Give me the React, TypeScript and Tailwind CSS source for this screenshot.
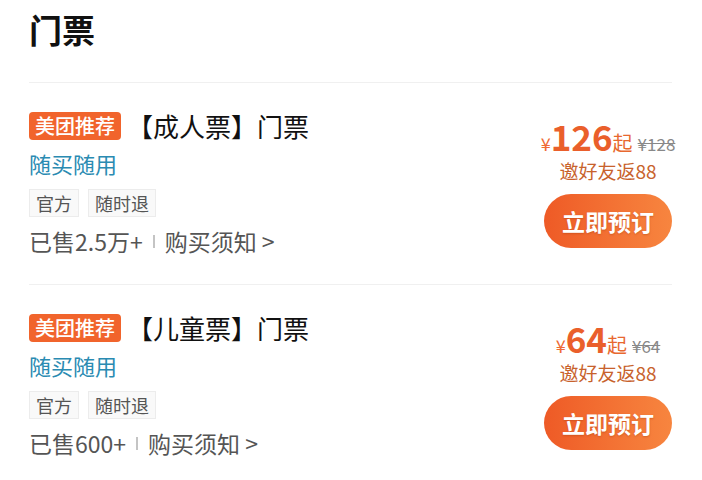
import React from "react";

const FONT = { fontFamily: '"Noto Sans CJK SC", "Noto Sans", sans-serif' };

type Ticket = {
  name: string;
  price: string;
  orig: string;
  sold: string;
};

const tickets: Ticket[] = [
  { name: "【成人票】门票", price: "126", orig: "¥128", sold: "已售2.5万+" },
  { name: "【儿童票】门票", price: "64", orig: "¥64", sold: "已售600+" },
];

function Row({ t, last }: { t: Ticket; last: boolean }) {
  return (
    <div className={`flex items-start justify-between pt-[29px] pb-[28px] ${last ? "" : "border-b border-[#f0f0f0]"}`}>
      <div className="flex flex-col">
        <div className="flex h-[28px] items-center">
          <span className="flex h-[28px] items-center rounded-[4px] bg-[#f1642c] px-[6px] text-[20px] font-medium leading-none text-white">
            美团推荐
          </span>
          <span className="ml-[6px] text-[26px] leading-none text-[#111]">{t.name}</span>
        </div>
        <div className="mt-[8px] text-[22px] leading-[30px] text-[#2a8bb2]">随买随用</div>
        <div className="mt-[11px] flex gap-[9px]">
          <span className="flex h-[28px] items-center border border-[#ececec] bg-[#f9f9f9] px-[6px] text-[18px] leading-none text-[#555]">
            官方
          </span>
          <span className="flex h-[28px] items-center border border-[#ececec] bg-[#f9f9f9] px-[6px] text-[18px] leading-none text-[#555]">
            随时退
          </span>
        </div>
        <div className="mt-[9px] flex h-[30px] items-center text-[23px] leading-none text-[#555]">
          <span>{t.sold}</span>
          <span className="mx-[10px] h-[13px] w-[2px] bg-[#c4c4c4]" />
          <span>购买须知 &gt;</span>
        </div>
      </div>
      <div className="mt-[6px] flex w-[128px] flex-col items-center">
        <div className="flex h-[36px] items-baseline whitespace-nowrap leading-none">
          <span className="text-[18px] leading-none text-[#ef6a34]">¥</span>
          <span className="text-[35px] font-bold leading-[36px] text-[#ea5f2b]">{t.price}</span>
          <span className="text-[20px] leading-none text-[#e8682f]">起</span>
          <span className="ml-[5px] text-[17px] leading-none text-[#888] line-through">{t.orig}</span>
        </div>
        <div className="mt-[7px] text-[19px] leading-[20px] text-[#c8622c]">邀好友返88</div>
        <button className="mt-[13px] flex h-[54px] w-full items-center justify-center rounded-full bg-gradient-to-r from-[#ee5a26] to-[#f7853f] text-[23px] font-bold text-white [text-shadow:0_1px_2px_rgba(150,50,0,0.35)]">
          立即预订
        </button>
      </div>
    </div>
  );
}

export default function App() {
  return (
    <div className="h-[480px] w-[702px] overflow-hidden bg-white pl-[29px] pr-[30px]" style={FONT}>
      <div className="pt-[13px] text-[33px] font-bold leading-[33px] text-[#111]">门票</div>
      <div className="mt-[36px] h-px bg-[#f0f0f0]" />
      {tickets.map((t, i) => (
        <Row key={i} t={t} last={i === tickets.length - 1} />
      ))}
    </div>
  );
}
